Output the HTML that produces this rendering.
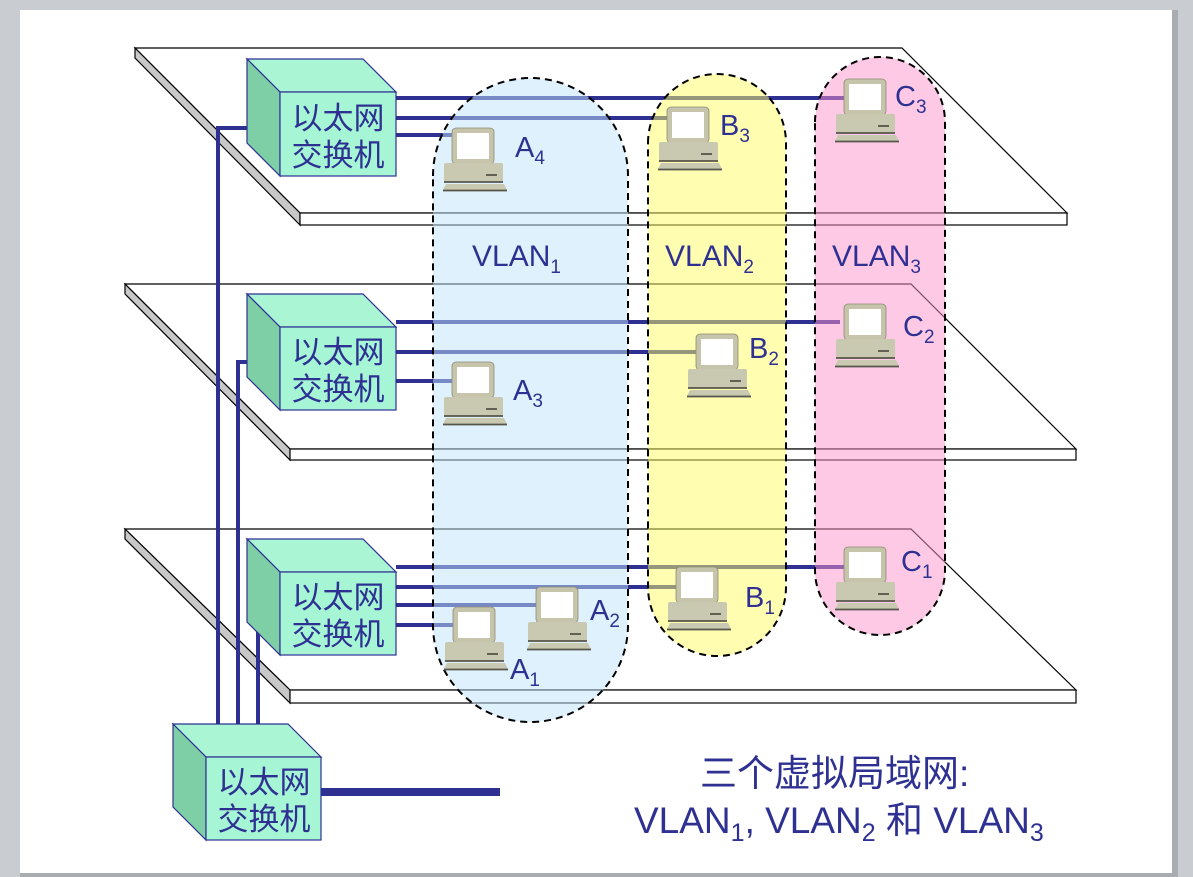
<!DOCTYPE html>
<html><head><meta charset="utf-8"><style>
html,body{margin:0;padding:0;width:1193px;height:877px;overflow:hidden;background:#c9ccd1}
svg{display:block}
text{font-family:"Liberation Sans","Noto Sans CJK SC",sans-serif;fill:#2e3192}
</style></head><body>
<svg width="1193" height="877" viewBox="0 0 1193 877" xmlns="http://www.w3.org/2000/svg">
<defs>
<g id="pc">
 <rect x="-1" y="-1" width="42" height="36" rx="4" fill="#c6c5ab" stroke="#8d8c74" stroke-width="0.8"/>
 <rect x="4" y="4" width="32" height="26" fill="#fff"/>
 <rect x="-9" y="34" width="59" height="19" rx="2" fill="#c9c8b0"/>
 <line x1="-9" y1="53" x2="50" y2="53" stroke="#55554a" stroke-width="1.8"/>
 <line x1="33" y1="46" x2="44" y2="46" stroke="#55554a" stroke-width="1.8"/>
 <polygon points="-7,55 51,55 54,61 -10,61" fill="#c9c8b0"/>
 <line x1="-10" y1="61.5" x2="54" y2="61.5" stroke="#55554a" stroke-width="1.8"/>
</g>
</defs>
<rect x="20" y="10" width="1152" height="863" fill="#fff"/>
<rect x="1172" y="10" width="6" height="863" fill="#a9acb1"/>
<rect x="20" y="873" width="1158" height="4" fill="#a9acb1"/>

<g stroke="#000" stroke-width="1.2" fill="#fff">
 <polygon points="135,48 902,48 1067,213 300,213"/>
 <polygon points="135,48 135,58 300,225 300,213" fill="#c8c8c8"/>
 <rect x="300" y="213" width="767" height="12"/>
 <polygon points="125,284 911,284 1076,449 290,449"/>
 <polygon points="125,284 125,294 290,460 290,449" fill="#c8c8c8"/>
 <rect x="290" y="449" width="786" height="11"/>
 <polygon points="125,529 911,529 1076,690 290,690"/>
 <polygon points="125,529 125,539 290,703 290,690" fill="#c8c8c8"/>
 <rect x="290" y="690" width="786" height="13"/>
</g>

<g stroke="#2e3192" stroke-width="4" fill="none">
 <line x1="396" y1="98" x2="845" y2="98"/>
 <line x1="396" y1="118" x2="668" y2="118"/>
 <line x1="396" y1="135" x2="453" y2="135"/>
 <polyline points="275,128 218,128 218,724"/>
 <line x1="396" y1="322" x2="840" y2="322"/>
 <line x1="396" y1="352" x2="697" y2="352"/>
 <line x1="396" y1="381" x2="453" y2="381"/>
 <polyline points="275,362 238,362 238,724"/>
 <line x1="396" y1="567" x2="845" y2="567"/>
 <line x1="396" y1="587" x2="677" y2="587"/>
 <line x1="396" y1="605" x2="537" y2="605"/>
 <line x1="396" y1="625" x2="454" y2="625"/>
 <polyline points="275,610 258,610 258,724"/>
 <line x1="321" y1="792" x2="500" y2="792" stroke-width="8"/>
</g>

<g stroke="#000" stroke-width="2" stroke-dasharray="7,5">
 <path d="M433,176 A97.5,98 0 0 1 628,176 L628,625 A97.5,97 0 0 1 433,625 Z" fill="rgba(191,227,249,0.5)"/>
 <path d="M648,143 A69,69 0 0 1 786,143 L786,587 A69,69 0 0 1 648,587 Z" fill="rgba(253,251,97,0.5)"/>
 <path d="M815,122 A65,65 0 0 1 945,122 L945,570 A65,65 0 0 1 815,570 Z" fill="rgba(253,147,201,0.5)"/>
</g>

<g stroke="#2e3192" stroke-width="1.2">
 <g>
  <polygon points="247,59 363,59 396,92 280,92" fill="#aaf5d3"/>
  <polygon points="247,59 280,92 280,176 247,143" fill="#7ecfa6"/>
  <rect x="280" y="92" width="116" height="84" fill="#a6f6d6"/>
 </g>
 <g>
  <polygon points="247,294 363,294 396,327 280,327" fill="#aaf5d3"/>
  <polygon points="247,294 280,327 280,410 247,377" fill="#7ecfa6"/>
  <rect x="280" y="327" width="116" height="83" fill="#a6f6d6"/>
 </g>
 <g>
  <polygon points="247,539 363,539 396,572 280,572" fill="#aaf5d3"/>
  <polygon points="247,539 280,572 280,655 247,622" fill="#7ecfa6"/>
  <rect x="280" y="572" width="116" height="83" fill="#a6f6d6"/>
 </g>
 <g>
  <polygon points="173,724 288,724 321,757 206,757" fill="#aaf5d3"/>
  <polygon points="173,724 206,757 206,840 173,807" fill="#7ecfa6"/>
  <rect x="206" y="757" width="115" height="83" fill="#a6f6d6"/>
 </g>
</g>
<g font-size="31">
 <text x="338" y="129" text-anchor="middle">以太网</text><text x="338" y="166" text-anchor="middle">交换机</text>
 <text x="338" y="363" text-anchor="middle">以太网</text><text x="338" y="400" text-anchor="middle">交换机</text>
 <text x="338" y="608" text-anchor="middle">以太网</text><text x="338" y="645" text-anchor="middle">交换机</text>
 <text x="264" y="793" text-anchor="middle">以太网</text><text x="264" y="830" text-anchor="middle">交换机</text>
</g>

<use href="#pc" x="453" y="129"/>
<use href="#pc" x="668" y="108"/>
<use href="#pc" x="845" y="80"/>
<use href="#pc" x="453" y="363"/>
<use href="#pc" x="697" y="335"/>
<use href="#pc" x="845" y="305"/>
<use href="#pc" x="845" y="548"/>
<use href="#pc" x="677" y="568"/>
<use href="#pc" x="537" y="588"/>
<use href="#pc" x="454" y="608"/>

<g font-size="29">
 <text x="515" y="157">A<tspan font-size="19" dy="7">4</tspan></text>
 <text x="720" y="135">B<tspan font-size="19" dy="7">3</tspan></text>
 <text x="895" y="106">C<tspan font-size="19" dy="7">3</tspan></text>
 <text x="513" y="400">A<tspan font-size="19" dy="7">3</tspan></text>
 <text x="749" y="358">B<tspan font-size="19" dy="7">2</tspan></text>
 <text x="903" y="336">C<tspan font-size="19" dy="7">2</tspan></text>
 <text x="901" y="571">C<tspan font-size="19" dy="7">1</tspan></text>
 <text x="745" y="607">B<tspan font-size="19" dy="7">1</tspan></text>
 <text x="590" y="620">A<tspan font-size="19" dy="7">2</tspan></text>
 <text x="510" y="679">A<tspan font-size="19" dy="7">1</tspan></text>
</g>
<g font-size="30">
 <text x="472" y="266">VLAN<tspan font-size="19" dy="7">1</tspan></text>
 <text x="665" y="266">VLAN<tspan font-size="19" dy="7">2</tspan></text>
 <text x="832" y="266">VLAN<tspan font-size="19" dy="7">3</tspan></text>
</g>
<g font-size="37">
 <text x="700" y="786">三个虚拟局域网:</text>
 <text x="634" y="833">VLAN<tspan font-size="25" dy="8">1</tspan><tspan dy="-8">, VLAN</tspan><tspan font-size="25" dy="8">2</tspan><tspan dy="-8"> 和 VLAN</tspan><tspan font-size="25" dy="8">3</tspan></text>
</g>
</svg>
</body></html>
